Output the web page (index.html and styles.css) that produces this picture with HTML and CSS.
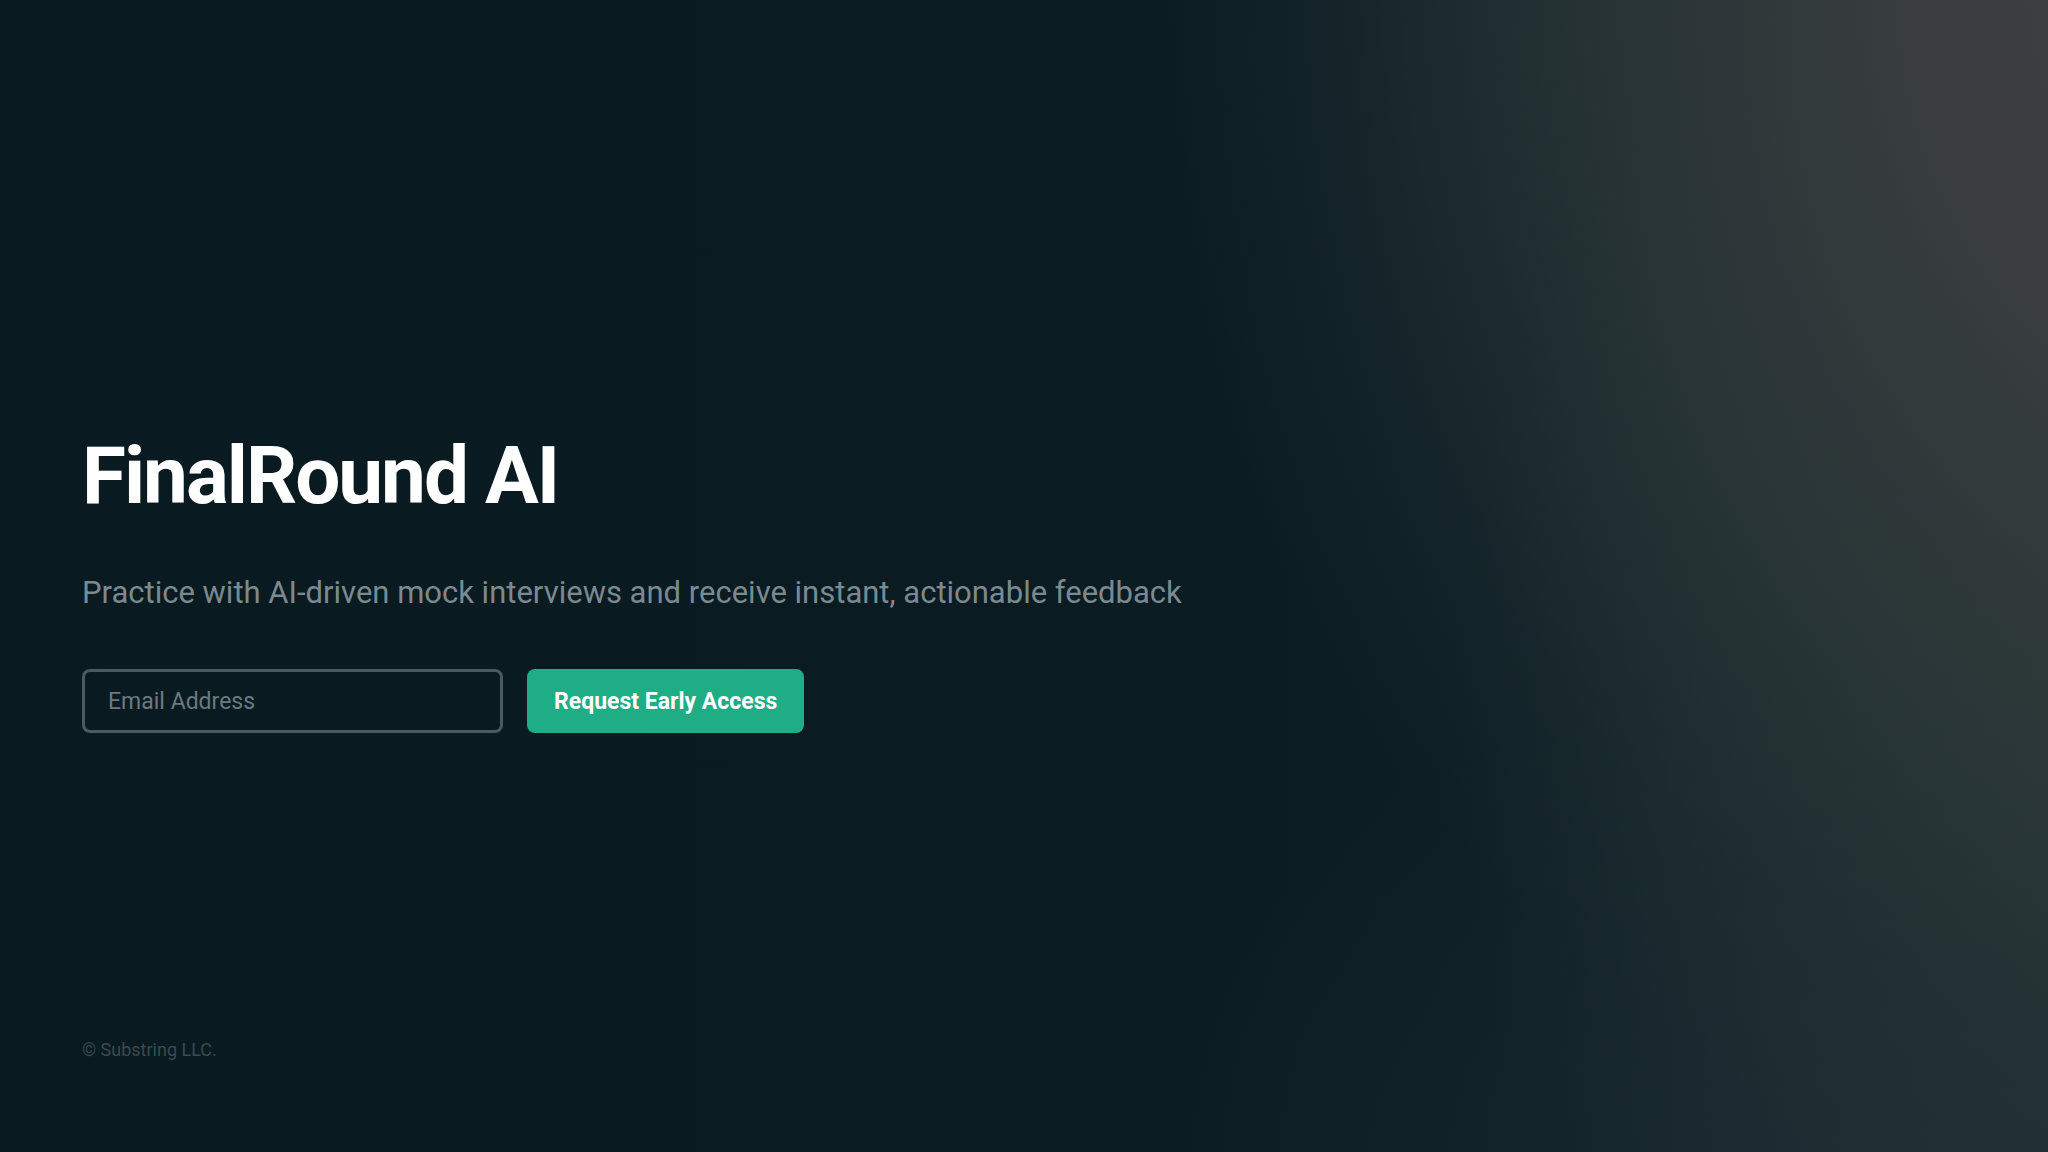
FILE: index.html
```html
<!DOCTYPE HTML>
<html>
  <head>
    <meta charset="UTF-8">
    <title>FinalRound AI</title>
    <link rel="stylesheet" href="styles.css">
  </head>

  <body>
    <div class="page">
      <main class="hero">
        <h1 class="title">FinalRound AI</h1>
        <p class="lead">Practice with AI-driven mock interviews and receive instant, actionable feedback</p>

        <form class="signup">
          <input type="email" class="input-field" placeholder="Email Address">
          <button type="button" class="button">Request Early Access</button>
        </form>
      </main>

      <footer class="footer">&copy; Substring LLC.</footer>
    </div>
  </body>
</html>
```

FILE: styles.css
```css
html, body {
  margin: 0;
  height: 100%;
}

body {
  font-family: Roboto, "Liberation Sans", sans-serif;
  color: #ffffff;
  background-color: #0a1b21;
  background-image:
    radial-gradient(ellipse 1150px 1300px at 2300px -40px, rgba(66, 66, 68, 1) 0%, rgba(58, 62, 63, 0.95) 35%, rgba(46, 57, 57, 0.7) 65%, rgba(36, 50, 52, 0.3) 85%, rgba(30, 45, 48, 0) 100%),
    radial-gradient(ellipse 780px 900px at 2230px 720px, rgba(50, 62, 60, 0.8) 0%, rgba(42, 56, 55, 0.45) 55%, rgba(30, 45, 48, 0) 100%),
    radial-gradient(ellipse 800px 560px at 1950px 1200px, rgba(28, 43, 51, 0.95) 0%, rgba(22, 38, 45, 0.5) 60%, rgba(10, 27, 33, 0) 100%),
    linear-gradient(to right, #091a20 0%, #0a1b21 50%, #10222a 100%);
}

.page {
  min-height: 100vh;
  display: flex;
  flex-direction: column;
  padding: 0 82px;
  box-sizing: border-box;
}

.hero {
  flex: 1;
  padding-top: 436px;
}

.title {
  margin: 0;
  font-size: 80px;
  line-height: 1;
  font-weight: 700;
  letter-spacing: -0.025em;
  color: #ffffff;
}

.lead {
  margin: 54px 0 0 0;
  font-size: 31px;
  line-height: 45px;
  color: #7b8a90;
}

.signup {
  display: flex;
  gap: 24px;
  margin-top: 54px;
}

.input-field {
  width: 421px;
  height: 64px;
  box-sizing: border-box;
  padding: 0 23px;
  font-family: Roboto, "Liberation Sans", sans-serif;
  font-size: 23px;
  color: #ffffff;
  background: transparent;
  border: 3px solid #4a5a60;
  border-radius: 8px;
}

.input-field::placeholder {
  color: #6a7a80;
}

.input-field:focus {
  outline: none;
  border-color: #1ead85;
}

.button {
  height: 64px;
  padding: 0 27px;
  font-family: Roboto, "Liberation Sans", sans-serif;
  font-size: 23px;
  font-weight: 700;
  color: #ffffff;
  background-color: #1ead85;
  border: none;
  border-radius: 8px;
  cursor: pointer;
}

.button:hover {
  background-color: #189a76;
}

.footer {
  padding-bottom: 88px;
  font-size: 18px;
  line-height: 28px;
  color: #3b4a50;
}
```
